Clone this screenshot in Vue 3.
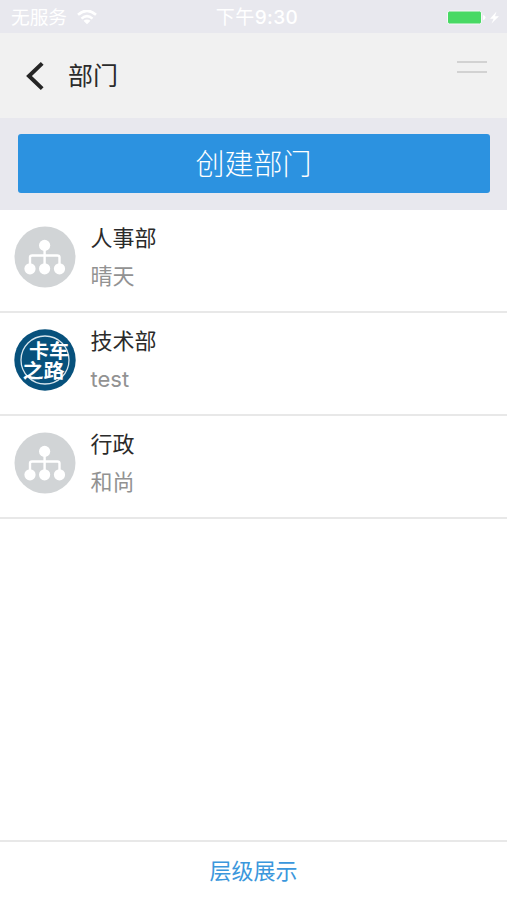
<script setup>
const departments = [
  { name: '人事部', lead: '晴天', logo: false },
  { name: '技术部', lead: 'test', logo: true },
  { name: '行政', lead: '和尚', logo: false },
]
</script>

<template>
  <div class="screen">
    <div class="status">
      <div class="carrier">
        <span>无服务</span>
        <svg width="20" height="16" viewBox="0 0 20 16" fill="none" stroke="#fff" stroke-width="2.6">
          <path d="M1 4.8Q10-3.2 19 4.8" />
          <path d="M4.5 8.6Q10 3.6 15.5 8.6" />
          <path d="M6.5 10.8Q10 8 13.5 10.8L10 14.3Z" fill="#fff" stroke="none" />
        </svg>
      </div>
      <span class="clock">下午<b>9:30</b></span>
      <svg class="battery" width="52" height="16" viewBox="0 0 52 16">
        <rect x="0.5" y="1" width="34" height="13" rx="2" fill="#48d964" stroke="#f6f8f8" />
        <path d="M36 5Q38.5 5.5 38.5 7.5T36 10Z" fill="#fff" />
        <path d="M49.5 1.5L43 8.7H46.6L44.5 13.5L52 6.3H48Z" fill="#fff" />
      </svg>
    </div>

    <header class="nav">
      <svg class="back" width="20" height="32" viewBox="0 0 20 32" fill="none" stroke="#252525" stroke-width="4">
        <path d="M18.2 3.4L5 16L18.2 28.6" />
      </svg>
      <h1>部门</h1>
      <div class="menu"><i></i><i></i></div>
    </header>

    <div class="action">
      <button>创建部门</button>
    </div>

    <ul class="list">
      <li v-for="d in departments" :key="d.name">
        <svg v-if="d.logo" class="avatar" viewBox="0 0 62 62">
          <circle cx="31" cy="31" r="30.7" fill="#07517c" />
          <circle cx="31" cy="31" r="24" fill="none" stroke="#d6e5ed" stroke-width="1.3" />
          <g class="logo-text" text-anchor="middle">
            <text x="35" y="28.5" textLength="40" lengthAdjust="spacingAndGlyphs">卡车</text>
            <text x="29.5" y="48.5" textLength="42" lengthAdjust="spacingAndGlyphs">之路</text>
          </g>
        </svg>
        <svg v-else class="avatar" viewBox="0 0 62 62">
          <circle cx="31" cy="31" r="30.5" fill="#d1d4d6" />
          <path d="M16 42V31.3Q16 29.5 18 29.5H43.5Q45.5 29.5 45.5 31.3V42M30.6 19V43" fill="none" stroke="#fff" stroke-width="2.4" />
          <g fill="#fff">
            <circle cx="30.6" cy="19.4" r="5.6" />
            <circle cx="16" cy="42.8" r="5.6" />
            <circle cx="30.6" cy="42.8" r="5.6" />
            <circle cx="45.5" cy="42.8" r="5.6" />
          </g>
        </svg>
        <div class="info">
          <div class="name">{{ d.name }}</div>
          <div class="lead">{{ d.lead }}</div>
        </div>
      </li>
    </ul>

    <footer>层级展示</footer>
  </div>
</template>

<style>
body {
  margin: 0;
}
</style>

<style scoped>
.screen {
  display: flex;
  flex-direction: column;
  width: 507px;
  height: 900px;
  background: #fff;
  overflow: hidden;
  font-family: Inter, "Noto Sans CJK SC", sans-serif;
  color: #2b2b2b;
}
.status {
  display: grid;
  grid-template-columns: 1fr auto 1fr;
  align-items: center;
  height: 33px;
  padding: 3px 8px 0 11px;
  box-sizing: border-box;
  background: #e8e8ee;
  color: #fff;
  font-size: 18.7px;
  line-height: 30px;
}
.carrier {
  display: flex;
  align-items: center;
  gap: 10px;
}
.clock {
  padding-left: 4px;
  font-size: 19px;
  letter-spacing: 0.4px;
}
.clock b {
  font-weight: 500;
}
.battery {
  justify-self: end;
}
.nav {
  display: flex;
  align-items: center;
  height: 85px;
  padding: 0 20px 0 24px;
  box-sizing: border-box;
  background: #f1f1f1;
}
h1 {
  margin: 0 0 0 24px;
  font-size: 25px;
  line-height: 36px;
  font-weight: 400;
}
.menu {
  display: flex;
  flex-direction: column;
  gap: 8px;
  width: 30px;
  margin: 0 0 17px auto;
}
.menu i {
  height: 2px;
  background: #d2d2d2;
}
.action {
  height: 92px;
  padding: 16px 17.5px 17px;
  box-sizing: border-box;
  background: #e8e8ee;
}
button {
  display: block;
  width: 100%;
  height: 59px;
  padding: 2px 0 0;
  border: 0;
  border-radius: 3px;
  background: #2c92e0;
  color: #fff;
  font-family: inherit;
  font-size: 29px;
  font-weight: 300;
  line-height: 57px;
}
.list {
  flex: 1;
  margin: 0;
  padding: 0;
  list-style: none;
}
li {
  display: flex;
  height: 103px;
  padding: 16px 14px 0;
  box-sizing: border-box;
  border-bottom: 2px solid #e8e8e8;
}
.avatar {
  width: 62px;
  height: 62px;
}
.logo-text {
  fill: #fff;
  font-family: "Noto Sans CJK SC", sans-serif;
  font-size: 19.5px;
  font-weight: 700;
}
.info {
  margin-left: 14.5px;
  font-size: 22px;
}
.name {
  height: 38px;
  margin-top: -7px;
  line-height: 38px;
}
.lead {
  height: 38px;
  line-height: 38px;
  color: #929292;
}
footer {
  height: 60px;
  box-sizing: border-box;
  border-top: 2px solid #e8e8e8;
  color: #3b97dc;
  font-size: 22px;
  line-height: 58px;
  text-align: center;
}
</style>
